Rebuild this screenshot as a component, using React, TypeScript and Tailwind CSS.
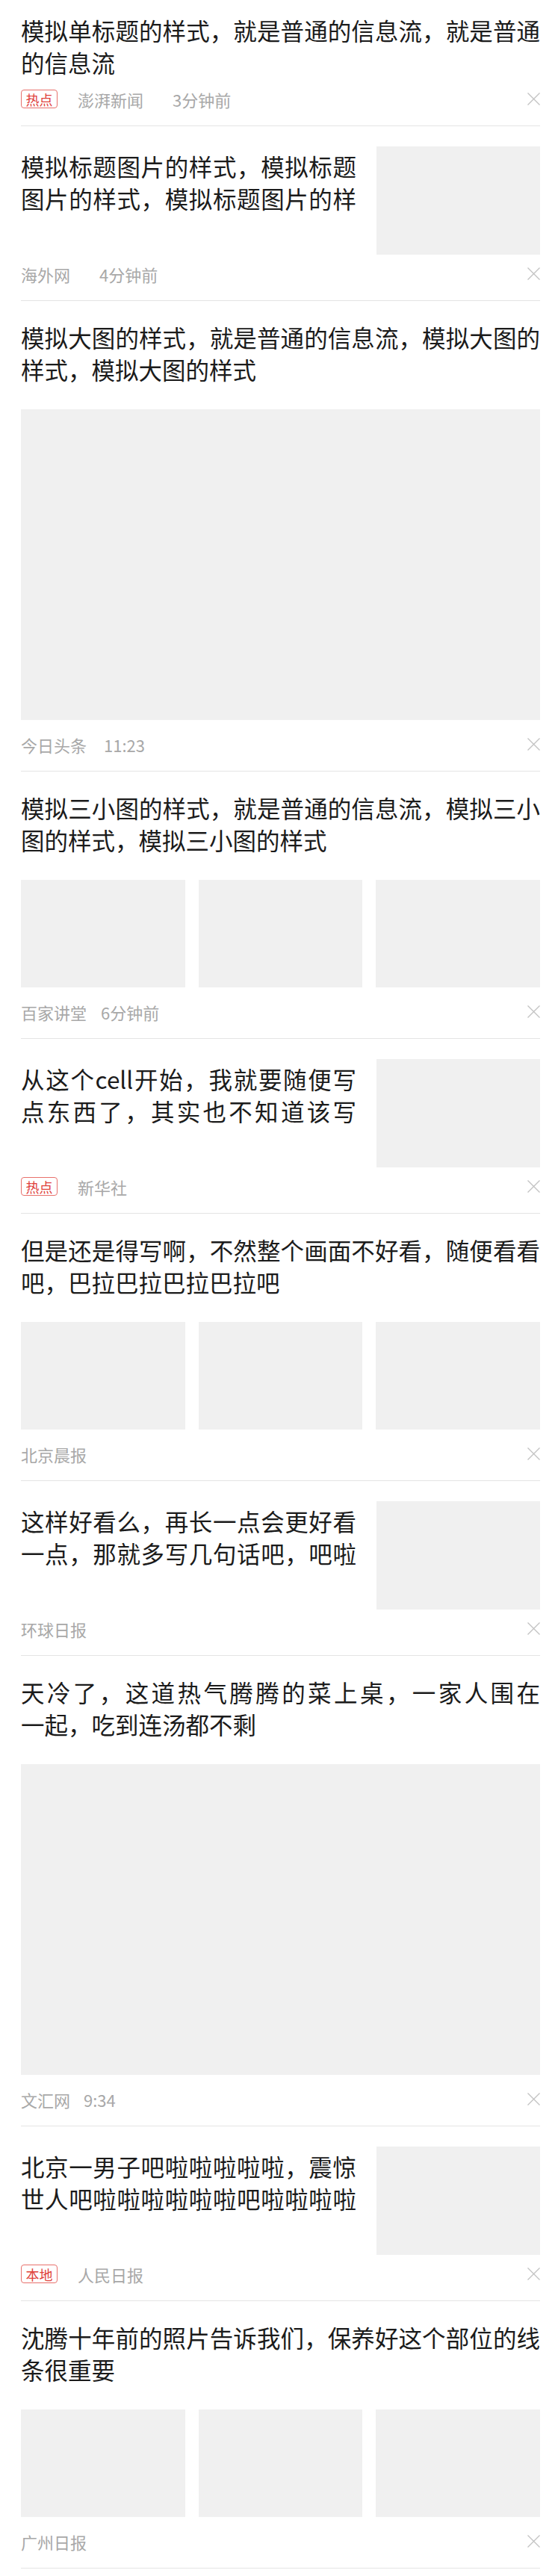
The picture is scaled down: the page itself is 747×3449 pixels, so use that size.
import React from 'react';

type Kind = 'text' | 'right' | 'big' | 'three';

interface FeedItem {
  kind: Kind;
  title: React.ReactNode;
  tag?: string;
  source: string;
  time?: string;
  timeGap?: number;
}

const items: FeedItem[] = [
  {
    kind: 'text',
    title: '模拟单标题的样式，就是普通的信息流，就是普通的信息流',
    tag: '热点',
    source: '澎湃新闻',
    time: '3分钟前',
    timeGap: 39,
  },
  {
    kind: 'right',
    title: '模拟标题图片的样式，模拟标题图片的样式，模拟标题图片的样',
    source: '海外网',
    time: '4分钟前',
    timeGap: 39,
  },
  {
    kind: 'big',
    title: '模拟大图的样式，就是普通的信息流，模拟大图的样式，模拟大图的样式',
    source: '今日头条',
    time: '11:23',
    timeGap: 23,
  },
  {
    kind: 'three',
    title: '模拟三小图的样式，就是普通的信息流，模拟三小图的样式，模拟三小图的样式',
    source: '百家讲堂',
    time: '6分钟前',
    timeGap: 19,
  },
  {
    kind: 'right',
    title: '从这个cell开始，我就要随便写点东西了，其实也不知道该写',
    tag: '热点',
    source: '新华社',
  },
  {
    kind: 'three',
    title: '但是还是得写啊，不然整个画面不好看，随便看看吧，巴拉巴拉巴拉巴拉吧',
    source: '北京晨报',
  },
  {
    kind: 'right',
    title: '这样好看么，再长一点会更好看一点，那就多写几句话吧，吧啦',
    source: '环球日报',
  },
  {
    kind: 'big',
    title: (
      <>
        天冷了，这道热气腾腾的菜上桌，一家人围在<span className="whitespace-nowrap">一起，</span>吃到连汤都不剩
      </>
    ),
    source: '文汇网',
    time: '9:34',
    timeGap: 18,
  },
  {
    kind: 'right',
    title: '北京一男子吧啦啦啦啦啦，震惊世人吧啦啦啦啦啦啦吧啦啦啦啦',
    tag: '本地',
    source: '人民日报',
  },
  {
    kind: 'three',
    title: '沈腾十年前的照片告诉我们，保养好这个部位的线条很重要',
    source: '广州日报',
  },
];

function CloseIcon() {
  return (
    <svg width="17" height="17" viewBox="0 0 17 17" fill="none">
      <path d="M0.5 0.5 L16.5 16.5 M16.5 0.5 L0.5 16.5" stroke="#c2c2c2" strokeWidth="1.3" />
    </svg>
  );
}

function MetaRow({ item, className }: { item: FeedItem; className: string }) {
  return (
    <div className={`flex h-[25px] items-center text-[22px] leading-none text-[#a8a8a8] ${className}`}>
      {item.tag && (
        <span className="mr-[27px] flex h-[25px] w-[49px] items-center justify-center rounded-[4px] border border-[#e8716c] text-[18px] text-[#e0413b]">
          {item.tag}
        </span>
      )}
      <span>{item.source}</span>
      {item.time && (
        <span style={{ marginLeft: item.timeGap }}>{item.time}</span>
      )}
      <span className="ml-auto">
        <CloseIcon />
      </span>
    </div>
  );
}

function Thumb({ className }: { className: string }) {
  return <div className={`bg-[#f0f0f0] ${className}`} />;
}

function Cell({ item, first }: { item: FeedItem; first: boolean }) {
  const titleCls = 'text-justify text-[31.5px] leading-[43px] text-[#1b1b1b]';

  return (
    <div className={first ? 'pt-[19px]' : 'pt-[27px]'}>
      {item.kind === 'right' ? (
        <>
          <div className="flex">
            {/* two visible lines, both stretched edge to edge like the native label */}
            <div className={`${titleCls} mt-[5px] w-[449px] [text-align-last:justify]`}>{item.title}</div>
            <Thumb className="ml-auto h-[145px] w-[219px]" />
          </div>
          <MetaRow item={item} className="mt-[13px]" />
        </>
      ) : (
        <>
          <div className={titleCls}>{item.title}</div>
          {item.kind === 'big' && <Thumb className="mt-[32px] h-[416px] w-full" />}
          {item.kind === 'three' && (
            <div className="mt-[32px] grid grid-cols-3 gap-[18px]">
              <Thumb className="h-[144px]" />
              <Thumb className="h-[144px]" />
              <Thumb className="h-[144px]" />
            </div>
          )}
          <MetaRow item={item} className={item.kind === 'text' ? 'mt-[15px]' : 'mt-[20px]'} />
        </>
      )}
      <div className="mt-[23px] h-px bg-[#e4e4e4]" />
    </div>
  );
}

export default function App() {
  return (
    <div className="min-h-screen bg-white pl-[28px] pr-[24px] font-['Noto_Sans_CJK_SC',sans-serif]">
      {items.map((item, i) => (
        <Cell key={i} item={item} first={i === 0} />
      ))}
    </div>
  );
}
